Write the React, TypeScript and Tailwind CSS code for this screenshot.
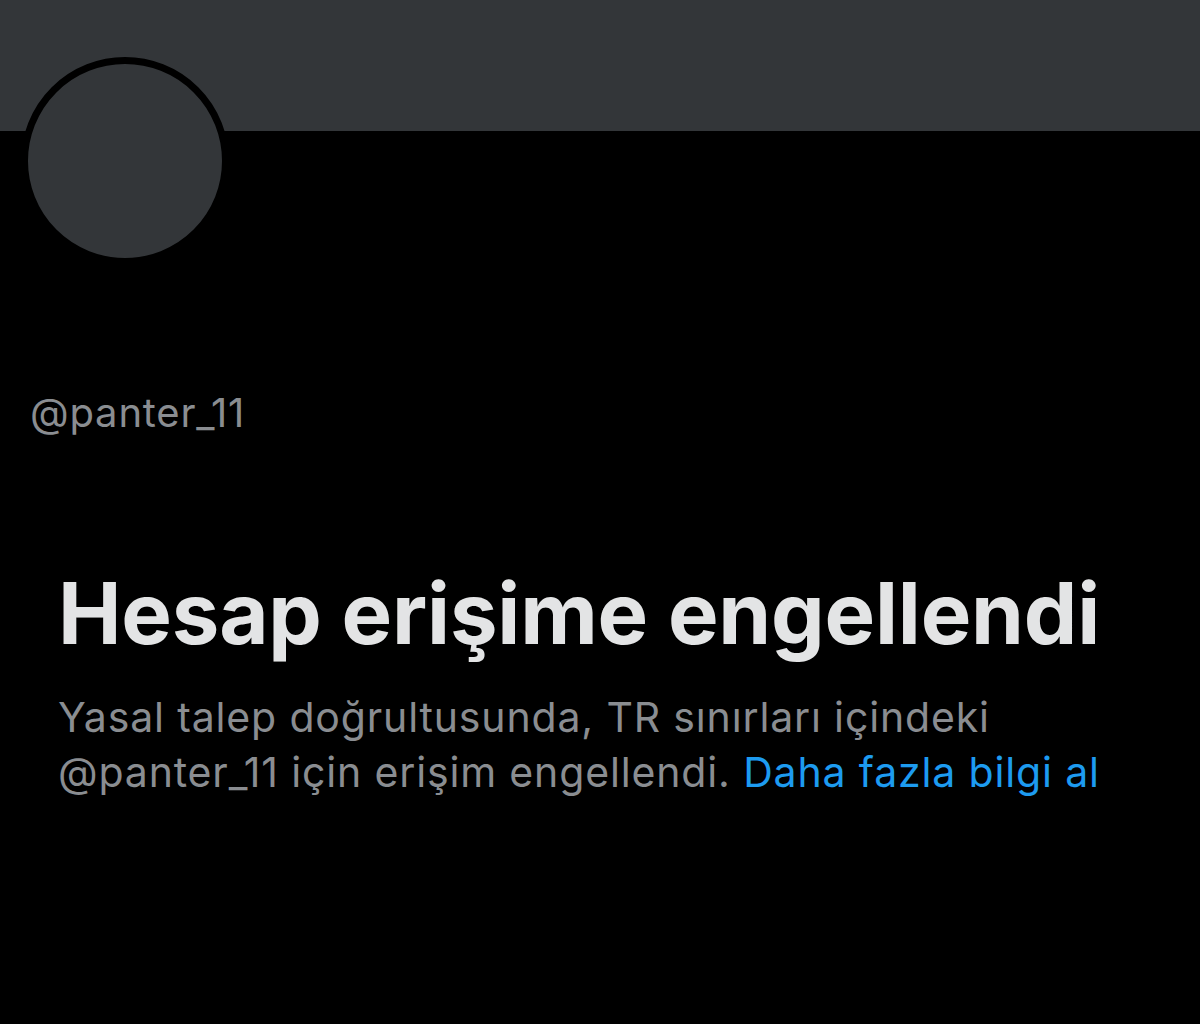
export default function App() {
  return (
    <div className="w-[1200px] h-[1024px] bg-black overflow-hidden" style={{ fontFamily: 'Inter, "Noto Sans", sans-serif' }}>
      <div className="h-[131px] bg-[#333639]" />
      <div className="ml-[21px] -mt-[74px] w-[208px] h-[208px] rounded-full border-[7px] border-black bg-[#333639]" />
      <div className="pl-[30px] mt-[124px] text-[40px] leading-[48px] text-[#8a8d91] tracking-[0.8px]">@panter_11</div>
      <div className="pl-[58px] mt-[127px]">
        <h1 className="text-[85px] leading-[100px] font-bold text-[#e3e4e5] tracking-[-0.2px]">Hesap erişime engellendi</h1>
        <p className="mt-[26px] text-[41px] leading-[55px] text-[#8a8d91] tracking-[0.85px] w-[1100px]">
          Yasal talep doğrultusunda, TR sınırları içindeki
          <br />
          @panter_11 için erişim engellendi.{" "}
          <span className="text-[#1d9bf0]">Daha fazla bilgi al</span>
        </p>
      </div>
    </div>
  );
}
